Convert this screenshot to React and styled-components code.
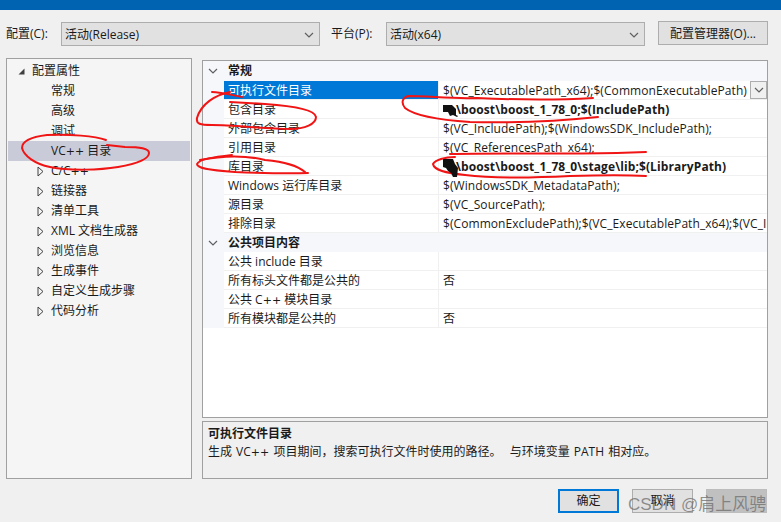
import React from "react";
import styled, { createGlobalStyle } from "styled-components";

const GlobalStyle = createGlobalStyle`
  html, body { margin: 0; padding: 0; background: #f0f0f0; }
  * { box-sizing: border-box; }
`;

const treeItems = [
  { label: "常规" },
  { label: "高级" },
  { label: "调试" },
  { label: "VC++ 目录", selected: true },
  { label: "C/C++", arrow: true },
  { label: "链接器", arrow: true },
  { label: "清单工具", arrow: true },
  { label: "XML 文档生成器", arrow: true },
  { label: "浏览信息", arrow: true },
  { label: "生成事件", arrow: true },
  { label: "自定义生成步骤", arrow: true },
  { label: "代码分析", arrow: true },
];

const generalRows = [
  { name: "可执行文件目录", value: "$(VC_ExecutablePath_x64);$(CommonExecutablePath)", selected: true },
  { name: "包含目录", value: "\\boost\\boost_1_78_0;$(IncludePath)", bold: true },
  { name: "外部包含目录", value: "$(VC_IncludePath);$(WindowsSDK_IncludePath);" },
  { name: "引用目录", value: "$(VC_ReferencesPath_x64);" },
  { name: "库目录", value: "\\boost\\boost_1_78_0\\stage\\lib;$(LibraryPath)", bold: true },
  { name: "Windows 运行库目录", value: "$(WindowsSDK_MetadataPath);" },
  { name: "源目录", value: "$(VC_SourcePath);" },
  { name: "排除目录", value: "$(CommonExcludePath);$(VC_ExecutablePath_x64);$(VC_IncludePath);$(WindowsSDK)" },
];

const publicRows = [
  { name: "公共 include 目录", value: "" },
  { name: "所有标头文件都是公共的", value: "否" },
  { name: "公共 C++ 模块目录", value: "" },
  { name: "所有模块都是公共的", value: "否" },
];

const Chevron = ({ size = 10 }) => (
  <svg width={size} height={size} viewBox="0 0 10 10" fill="none">
    <path d="M1 3l4 4 4-4" stroke="#606060" strokeWidth="1.2" />
  </svg>
);

// the plus signs are much wider in the dialog font
const Label = ({ text }) => {
  const parts = text.split("++");
  if (parts.length < 2) return text;
  return (
    <span>
      {parts[0]}
      <Plus>++</Plus>
      {parts[1]}
    </span>
  );
};

const Section = ({ title, rows }) => (
  <>
    <SectionHeader>
      <ChevronSlot>
        <Chevron />
      </ChevronSlot>
      {title}
    </SectionHeader>
    {rows.map((row) => (
      <Row key={row.name}>
        <NameCell $selected={row.selected}>
          <Label text={row.name} />
        </NameCell>
        <ValueCell>
          <ValueText $bold={row.bold}>{row.value}</ValueText>
          {row.selected && (
            <RowDropdown>
              <Chevron />
            </RowDropdown>
          )}
        </ValueCell>
      </Row>
    ))}
  </>
);

const Page = () => (
  <Window>
    <TitleBar />
    <Toolbar>
      <ToolLabel>配置(C):</ToolLabel>
      <Combo>
        活动(Release)
        <Chevron />
      </Combo>
      <ToolLabel $left={11}>平台(P):</ToolLabel>
      <Combo>
        活动(x64)
        <Chevron />
      </Combo>
      <ManagerButton>配置管理器(O)...</ManagerButton>
    </Toolbar>
    <Main>
      <Tree>
        <TreeRow $indent={3}>
          <ArrowSlot>
            <svg width="7" height="7" viewBox="0 0 7 7">
              <path d="M6.5 0.5v6h-6z" fill="#404040" />
            </svg>
          </ArrowSlot>
          配置属性
        </TreeRow>
        {treeItems.map((item) => (
          <TreeRow key={item.label} $indent={22} $selected={item.selected}>
            <ArrowSlot>
              {item.arrow && (
                <svg width="7" height="11" viewBox="0 0 7 11" fill="none">
                  <path d="M1 1l5 4.5-5 4.5z" stroke="#404040" />
                </svg>
              )}
            </ArrowSlot>
            <Label text={item.label} />
          </TreeRow>
        ))}
      </Tree>
      <RightColumn>
        <Grid>
          <Section title="常规" rows={generalRows} />
          <Section title="公共项目内容" rows={publicRows} />
        </Grid>
        <Description>
          <DescTitle>可执行文件目录</DescTitle>
          <DescText>
            <Label text={"生成 VC++ 项目期间，搜索可执行文件时使用的路径。\u00a0\u00a0与环境变量 PATH 相对应。"} />
          </DescText>
        </Description>
      </RightColumn>
    </Main>
    <Footer>
      <DialogButton $primary>确定</DialogButton>
      <DialogButton>取消</DialogButton>
      <DialogButton $disabled />
    </Footer>
    <Scribbles width="781" height="522" viewBox="0 0 781 522" fill="none">
      <g stroke="#f01414" strokeWidth="2" strokeLinecap="round" strokeLinejoin="round">
        <path d="M106 140C95 136 70 134 47 135C30 137 22 141 22 148C24 156 35 164 50 167C70 171 100 170 118 167C135 164 149 160 149 153C149 148 140 147 125 147L107 145" />
        <path d="M212 92C220 92 232 95 242 97" />
        <path d="M230 92C215 95 201 104 197 118C196 124 200 125 212 125C235 125 265 129 290 129C305 129 316 124 316 117C315 110 295 106 265 104L230 102" />
        <path d="M232 155C215 157 199 159 197 164C197 168 207 170 235 172C260 173 285 174 308 173" />
        <path d="M200 160C220 156 245 155 265 160C285 162 297 165 305 172" />
        <path d="M593 98C560 100 520 100 477 98C450 99 430 96 408 96C402 98 401 103 405 108C415 116 440 120 470 122C510 123 550 122 598 117" />
        <path d="M450 154C500 153 560 154 617 153L646 152" />
        <path d="M455 157C445 157 435 160 433 164C434 170 445 173 465 175C490 178 530 178 570 176C600 175 630 175 646 176" />
      </g>
      <g fill="#111111">
        <path d="M443 105h9l4 4v6l2 1-1 1-4-2-3 1-2-4h-5z" />
        <path d="M443 159h10l2 5 3 4-1 9-4 0-2-4-3-2-2-3-3-1z" />
      </g>
    </Scribbles>
    <Watermark>CSDN @肩上风骋</Watermark>
  </Window>
);

const FONT = `"Open Sans", "Noto Sans CJK SC", sans-serif`;

const Window = styled.div`
  position: relative;
  width: 781px;
  height: 522px;
  overflow: hidden;
  background: #f0f0f0;
  color: #1a1a1a;
  font: 12px/16px ${FONT};
`;

const Plus = styled.span`
  font-family: "DejaVu Sans", sans-serif;
  font-size: 11px;
`;

const TitleBar = styled.div`
  height: 10px;
  background: #0063b1;
`;

const Toolbar = styled.div`
  display: flex;
  align-items: center;
  height: 24px;
  margin-top: 12px;
  padding-left: 6px;
`;

const ToolLabel = styled.span`
  width: 55px;
  margin-left: ${(p) => p.$left || 0}px;
`;

const Combo = styled.div`
  display: flex;
  align-items: center;
  justify-content: space-between;
  width: 259px;
  height: 24px;
  padding: 1px 5px 0 3px;
  background: #e1e1e1;
  border: 1px solid #adadad;
`;

const ManagerButton = styled.div`
  display: flex;
  align-items: center;
  justify-content: center;
  width: 110px;
  height: 24px;
  margin: -2px 0 0 13px;
  padding-top: 1px;
  background: #e1e1e1;
  border: 1px solid #adadad;
`;

const Main = styled.div`
  display: flex;
  margin-top: 12px;
  padding: 0 13px 0 6px;
  height: 421px;
`;

const Tree = styled.div`
  width: 186px;
  padding-top: 2px;
  background: #f5f5f5;
  border: 1px solid #a0a0a0;
`;

const TreeRow = styled.div`
  display: flex;
  align-items: center;
  height: 20px;
  margin: 0 1px;
  padding-left: ${(p) => p.$indent}px;
  background: ${(p) => (p.$selected ? "#c9cbd9" : "transparent")};
`;

const ArrowSlot = styled.span`
  display: flex;
  align-items: center;
  justify-content: center;
  width: 21px;
  height: 100%;
`;

const RightColumn = styled.div`
  display: flex;
  flex-direction: column;
  width: 566px;
  margin: 2px 0 0 10px;
`;

const Grid = styled.div`
  height: 358px;
  overflow: hidden;
  background: #fff;
  border: 1px solid #a0a0a0;
`;

const SectionHeader = styled.div`
  display: flex;
  align-items: center;
  height: 19px;
  background: #f5f7fb;
  font-weight: 700;

  &:first-child {
    height: 20px;
  }
`;

const ChevronSlot = styled.span`
  display: flex;
  justify-content: center;
  width: 19px;
  margin-right: 6px;
`;

const Row = styled.div`
  display: flex;
  height: 19px;
  padding-left: 21px;
  background: linear-gradient(to right, #f5f7fb 21px, #fff 21px);
`;

const NameCell = styled.div`
  width: 214px;
  padding-left: 4px;
  line-height: 20px;
  border-bottom: 1px solid #f0f0f0;
  background: ${(p) => (p.$selected ? "#0078d7" : "transparent")};
  color: ${(p) => (p.$selected ? "#fff" : "inherit")};
`;

const ValueCell = styled.div`
  display: flex;
  flex: 1;
  min-width: 0;
  padding-left: 4px;
  line-height: 20px;
  border-left: 1px solid #f0f0f0;
  border-bottom: 1px solid #f0f0f0;
`;

const ValueText = styled.span`
  flex: 1;
  min-width: 0;
  height: 18px;
  overflow: hidden;
  white-space: nowrap;
  padding-left: ${(p) => (p.$bold ? 13 : 0)}px;
  font-weight: ${(p) => (p.$bold ? 700 : 400)};
  letter-spacing: ${(p) => (p.$bold ? "0.1px" : "0.07px")};
`;

const RowDropdown = styled.span`
  display: flex;
  align-items: center;
  justify-content: center;
  width: 17px;
  height: 18px;
  background: #f0f0f0;
  border: 1px solid #adadad;
`;

const Description = styled.div`
  height: 58px;
  margin-top: 3px;
  padding: 3px 5px;
  background: #f0f0f0;
  border: 1px solid #a0a0a0;
  line-height: 18px;
`;

const DescTitle = styled.div`
  font-weight: 700;
`;

const DescText = styled.div`
  white-space: nowrap;
  word-spacing: 1px;
`;

const Footer = styled.div`
  display: flex;
  justify-content: flex-end;
  gap: 13px;
  margin-top: 10px;
  padding-right: 14px;
`;

const DialogButton = styled.div`
  display: flex;
  align-items: center;
  justify-content: center;
  width: 61px;
  height: 24px;
  background: ${(p) => (p.$disabled ? "#c0c0c0" : "#e1e1e1")};
  border: ${(p) => (p.$primary ? "2px solid #0078d7" : p.$disabled ? "1px solid #bdbdbd" : "1px solid #adadad")};
`;

const Scribbles = styled.svg`
  position: absolute;
  left: 0;
  top: 0;
  pointer-events: none;
`;

const Watermark = styled.div`
  position: absolute;
  left: 628px;
  top: 495px;
  color: rgba(110, 110, 110, 0.75);
  font: 17px/20px "Liberation Sans", "Noto Sans CJK SC", sans-serif;
  white-space: nowrap;
`;

export default function App() {
  return (
    <>
      <GlobalStyle />
      <Page />
    </>
  );
}
